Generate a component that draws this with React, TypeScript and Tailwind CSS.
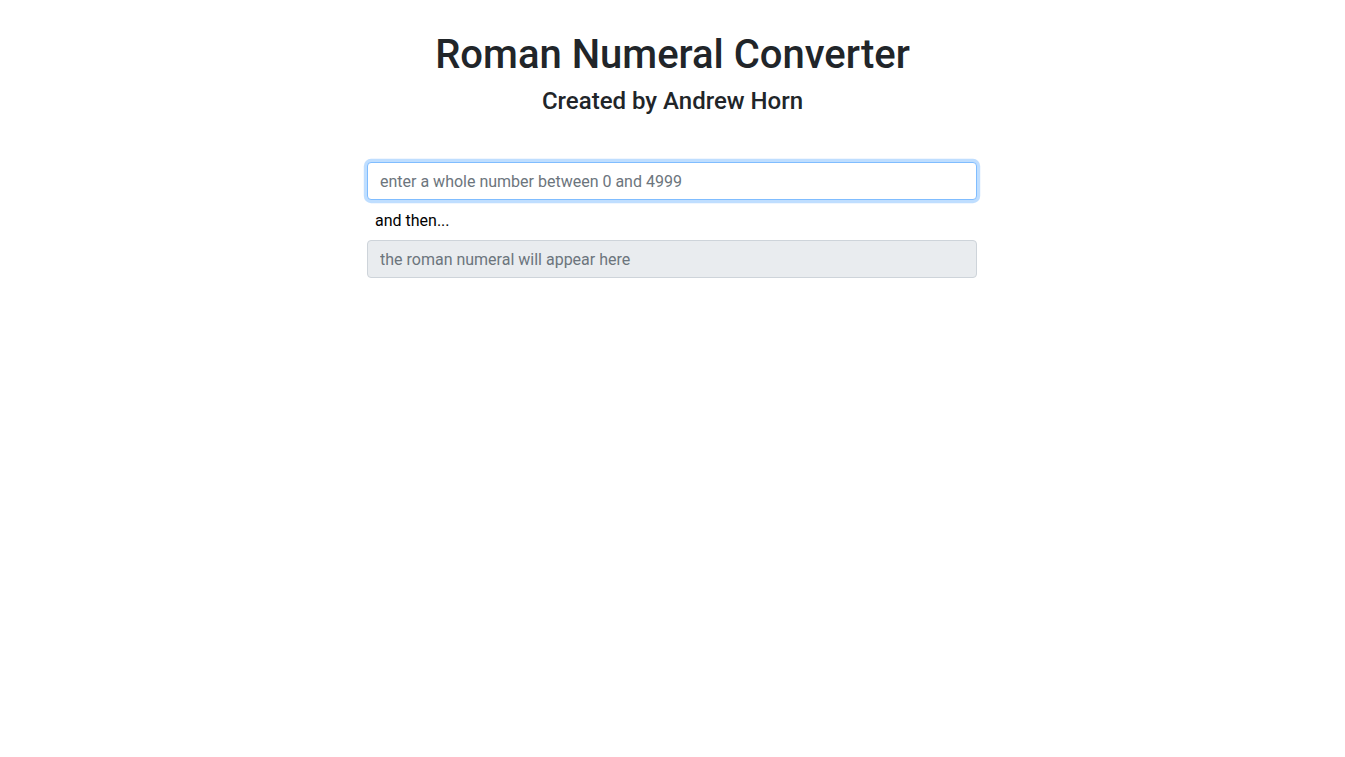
export default function App() {
  return (
    <div
      className="min-h-screen bg-white text-[#212529]"
      style={{ fontFamily: 'Roboto, "Liberation Sans", sans-serif' }}
    >
      <div className="pt-[31px] flex flex-col items-center">
        <h1 className="text-[40px] leading-[1.2] font-medium mb-2">Roman Numeral Converter</h1>
        <h4 className="text-[24px] leading-[1.2] font-medium">Created by Andrew Horn</h4>
      </div>
      <div className="w-[611px] mx-auto mt-[46.5px] flex flex-col gap-2">
        <input
          type="text"
          placeholder="enter a whole number between 0 and 4999"
          className="block w-[610px] h-[38px] px-3 py-1.5 text-base leading-6 text-[#495057] bg-white border border-[#80bdff] rounded outline-none shadow-[0_0_0_3.2px_rgba(0,123,255,0.25)] placeholder:text-[#6c757d]"
        />
        <div className="px-2 pt-px h-6 text-base leading-6 text-black">and then...</div>
        <input
          type="text"
          readOnly
          placeholder="the roman numeral will appear here"
          className="block w-[610px] h-[38px] px-3 py-1.5 text-base leading-6 text-[#495057] bg-[#e9ecef] border border-[#ced4da] rounded outline-none placeholder:text-[#6c757d]"
        />
      </div>
    </div>
  );
}
